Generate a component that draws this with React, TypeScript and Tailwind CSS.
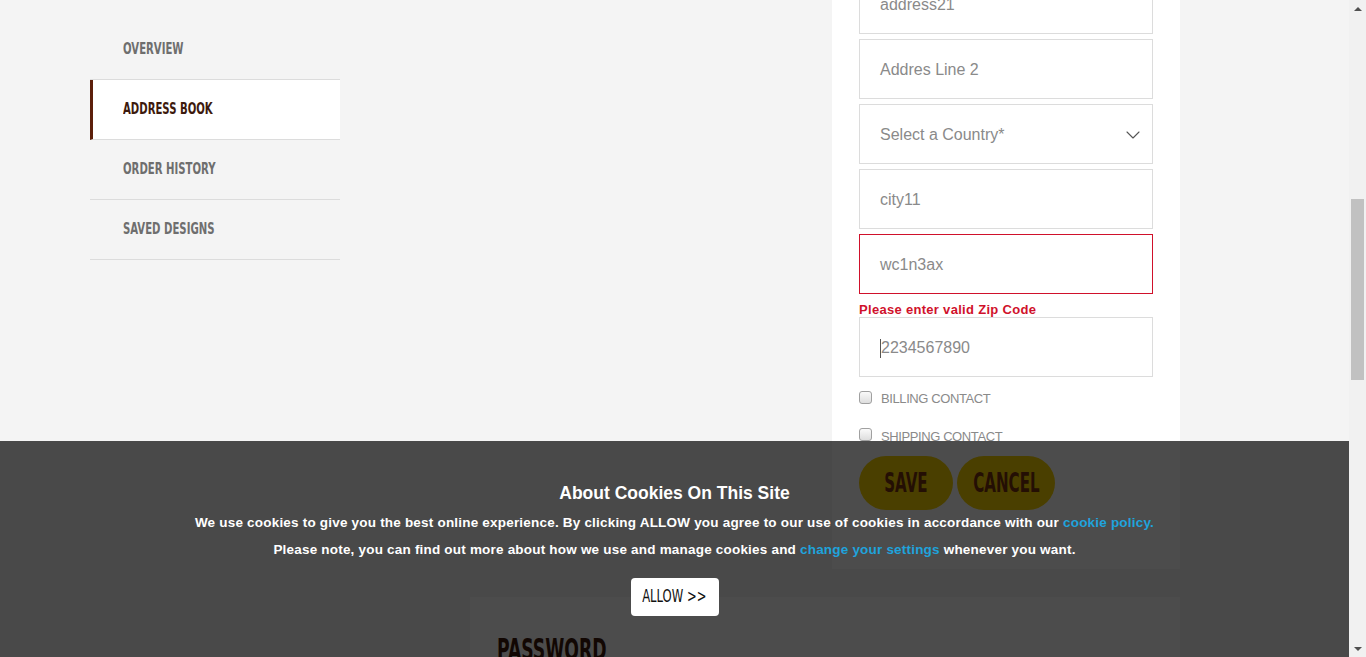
import { ChevronDown } from "lucide-react";

const narrow = "font-['Liberation_Sans_Narrow','DejaVu_Sans_Condensed',sans-serif]";

const navItems = [
  { label: "OVERVIEW", active: false },
  { label: "ADDRESS BOOK", active: true },
  { label: "ORDER HISTORY", active: false },
  { label: "SAVED DESIGNS", active: false },
];

// condensed text: the installed condensed face is wider than the site's, so squeeze it
const Squeeze = ({ children, k }: { children: React.ReactNode; k: string }) => (
  <span className={`inline-block whitespace-nowrap ${k}`}>{children}</span>
);

const Field = ({ value, error }: { value: string; error?: boolean }) => (
  <div
    className={`h-[60px] flex items-center pl-5 pr-4 pt-[2px] bg-white border text-[16px] text-[#8a8a8a] ${
      error ? "border-[#d0112b]" : "border-[#dcdcdc]"
    }`}
  >
    {value}
  </div>
);

const Check = ({ label }: { label: string }) => (
  <div className="flex items-center gap-[9px] text-[13px] text-[#8a8a8a] tracking-[-0.4px]">
    <span className="w-[13px] h-[13px] rounded-[3px] border border-[#a0a0a0] bg-gradient-to-b from-[#fafafa] to-[#dedede] -mt-[3px]"></span>
    <span>{label}</span>
  </div>
);

export default function App() {
  return (
    <div className="relative h-[657px] overflow-hidden flex bg-[#f4f4f4] font-['Liberation_Sans',Arial,sans-serif]">
      <div className="flex-1 flex">
        <div className="ml-[90px] w-[1090px] flex gap-[130px]">
          {/* side nav */}
          <div className="w-[250px] mt-[20px] flex flex-col">
            {navItems.map((n) => (
              <div
                key={n.label}
                className={`h-[60px] flex items-center border-b border-b-[#dcdcdc] ${narrow} font-bold text-[15px] ${
                  n.active
                    ? "bg-white border-l-[3px] border-l-[#5c1f0a] text-[#3d1a0d] pl-[30px]"
                    : "text-[#6e6e6e] pl-[33px]"
                }`}
              >
                <Squeeze k="scale-x-[0.75] origin-left">{n.label}</Squeeze>
              </div>
            ))}
          </div>

          {/* main column */}
          <div className="w-[710px] flex flex-col items-end -mt-[47px]">
            <div className="w-[348px] bg-white px-[27px] pt-[21px] pb-[59px] flex flex-col">
              <div className="flex flex-col gap-[5px]">
                <Field value="address21" />
                <Field value="Addres Line 2" />
                <div className="h-[60px] flex items-center justify-between pl-5 pr-[7px] pt-[2px] bg-white border border-[#dcdcdc] text-[16px] text-[#8a8a8a]">
                  <span>Select a Country*</span>
                  <ChevronDown size={24} strokeWidth={1.1} className="text-[#555]" />
                </div>
                <Field value="city11" />
                <Field value="wc1n3ax" error />
              </div>
              <div className="mt-[8px] text-[13px] font-bold text-[#d0112b] tracking-[0.3px] leading-[15px]">
                Please enter valid Zip Code
              </div>
              <div className="h-[60px] flex items-center pl-5 pt-[2px] bg-white border border-[#dcdcdc] text-[16px] text-[#8a8a8a]">
                <span className="w-px h-[19px] bg-[#555]"></span>
                <span>2234567890</span>
              </div>
              <div className="mt-[12px] flex flex-col gap-[18px]">
                <Check label="BILLING CONTACT" />
                <Check label="SHIPPING CONTACT" />
              </div>
              <div className="mt-[10px] flex gap-[4px]">
                <button className={`w-[94px] h-[54px] rounded-full bg-[#f7d200] text-[#7a3210] ${narrow} font-bold text-[27px] flex items-center justify-center`}>
                  <Squeeze k="scale-x-[0.62] origin-center">SAVE</Squeeze>
                </button>
                <button className={`w-[98px] h-[54px] rounded-full bg-[#f7d200] text-[#7a3210] ${narrow} font-bold text-[27px] flex items-center justify-center`}>
                  <Squeeze k="scale-x-[0.62] origin-center">CANCEL</Squeeze>
                </button>
              </div>
            </div>
            <div className="w-[710px] mt-[28px] bg-white px-[27px] pt-[38px] h-[200px]">
              <h2 className={`${narrow} font-bold text-[30px] text-[#3d1a0d] leading-none`}>
                <Squeeze k="scale-x-[0.64] origin-left">PASSWORD</Squeeze>
              </h2>
            </div>
          </div>
        </div>
      </div>

      {/* scrollbar */}
      <div className="w-[17px] bg-[#f1f1f1] flex flex-col items-center">
        <div className="h-[17px] flex items-center justify-center">
          <div className="w-0 h-0 border-l-[4px] border-r-[4px] border-b-[4px] border-l-transparent border-r-transparent border-b-[#505050]"></div>
        </div>
        <div className="mt-[182px] w-[13px] h-[181px] bg-[#c1c1c1]"></div>
        <div className="flex-1"></div>
        <div className="h-[17px] flex items-center justify-center">
          <div className="w-0 h-0 border-l-[4px] border-r-[4px] border-t-[4px] border-l-transparent border-r-transparent border-t-[#505050]"></div>
        </div>
      </div>

      {/* cookie banner */}
      <div className="absolute left-0 right-[17px] top-[441px] bottom-0 bg-black/70 flex flex-col items-center pt-[42px] text-white font-bold">
        <div className="text-[17.5px] leading-[20px]">About Cookies On This Site</div>
        <p className="mt-[6px] text-[13.5px] leading-[27px] tracking-[0.2px]">
          We use cookies to give you the best online experience. By clicking ALLOW you agree to our use of cookies in accordance with our{" "}
          <span className="text-[#1fa3dc]">cookie policy.</span>
        </p>
        <p className="text-[13.5px] leading-[27px] tracking-[0.2px]">
          Please note, you can find out more about how we use and manage cookies and{" "}
          <span className="text-[#1fa3dc]">change your settings</span> whenever you want.
        </p>
        <button className={`mt-[15px] w-[88px] h-[38px] rounded-[4px] bg-white text-[#111] ${narrow} text-[17px] font-normal flex items-center justify-center`}>
          <Squeeze k="scale-x-[0.76] origin-center">ALLOW &gt;&gt;</Squeeze>
        </button>
      </div>
    </div>
  );
}
